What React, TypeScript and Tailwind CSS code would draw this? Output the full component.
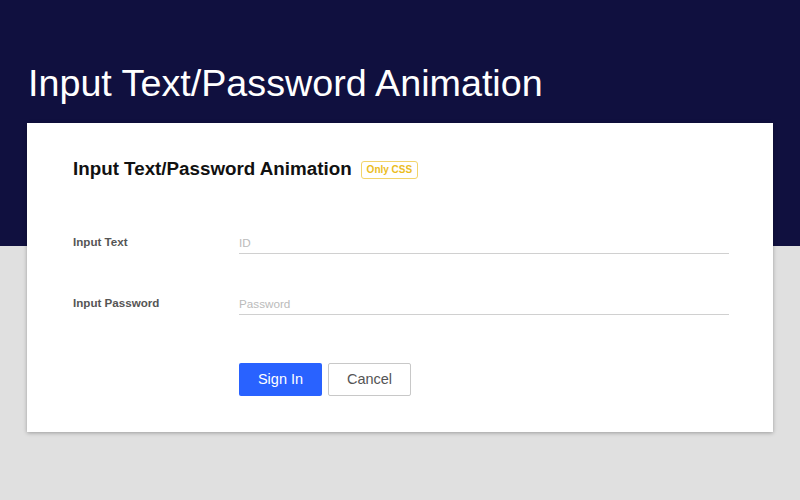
import * as React from 'react';

const font = { fontFamily: '"Liberation Sans", Arial, sans-serif' };

const Field: React.FC<{ label: string; placeholder: string; type: string }> = ({
  label,
  placeholder,
  type,
}) => (
  <div className="flex items-end h-[31px]">
    <label className="w-[166px] pb-[4px] text-[11.6px] leading-[16px] font-bold text-[#555]">{label}</label>
    <input
      type={type}
      placeholder={placeholder}
      className="w-[490px] h-[23px] border-b border-[#d0d0d0] text-[11.7px] text-[#333] placeholder:text-[#bbb] outline-none bg-transparent"
    />
  </div>
);

export default function App() {
  return (
    <div className="min-h-[500px] bg-[#e0e0e0]" style={font}>
      {/* Header band */}
      <div className="h-[246px] bg-[#10103f] pt-[62px] pl-[28px]">
        <h1 className="text-[37.7px] leading-[42px] text-white">Input Text/Password Animation</h1>
      </div>

      {/* Card */}
      <div className="mx-[27px] -mt-[123px] h-[309px] bg-white shadow-[0_1px_4px_rgba(0,0,0,0.3)] pl-[46px] pt-[34px]">
        <div className="flex items-center gap-[9px] h-[24px]">
          <h2 className="text-[18.8px] leading-[24px] font-bold text-[#111]">Input Text/Password Animation</h2>
          <span className="mt-[2px] border border-[#f2d46a] rounded-[3px] px-[5px] h-[18px] leading-[16px] text-[10px] font-bold text-[#ebbd1e]">
            Only CSS
          </span>
        </div>

        <div className="mt-[42px] flex flex-col gap-[30px]">
          <Field label="Input Text" placeholder="ID" type="text" />
          <Field label="Input Password" placeholder="Password" type="password" />
        </div>

        <div className="mt-[48px] ml-[166px] flex gap-[6px]">
          <button className="w-[83px] h-[33px] bg-[#2962ff] text-white text-[14.5px] rounded-[2px]">Sign In</button>
          <button className="w-[83px] h-[33px] bg-white border border-[#c8c8c8] text-[#555] text-[14.5px] rounded-[2px]">
            Cancel
          </button>
        </div>
      </div>
    </div>
  );
}
